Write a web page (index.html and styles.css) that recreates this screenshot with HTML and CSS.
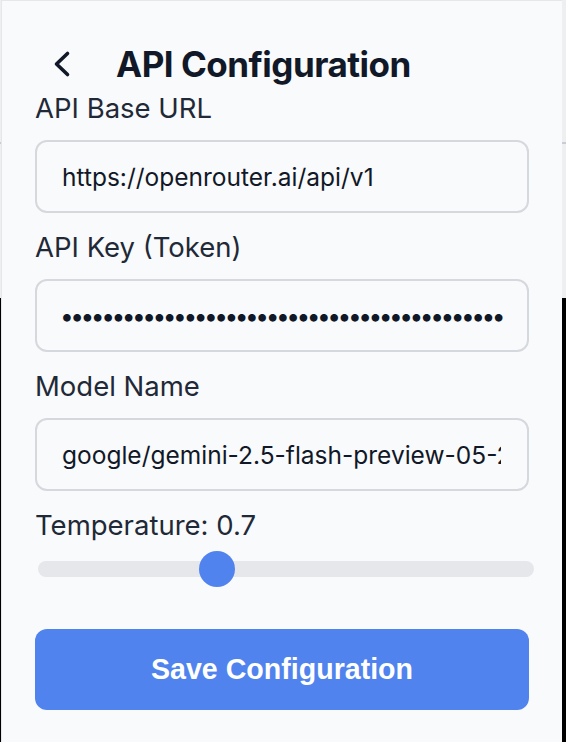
FILE: index.html
```html
<!DOCTYPE html>
<html lang="en">
<head>
<meta charset="utf-8">
<title>API Configuration</title>
<link rel="stylesheet" href="styles.css">
</head>
<body>
<div class="backdrop">
  <div class="backdrop-top"></div>
  <div class="backdrop-bottom"></div>
</div>
<div class="panel">
  <header class="panel-header">
    <button class="back-btn" type="button" aria-label="Back">
      <svg width="20" height="28" viewBox="0 0 20 28" fill="none">
        <path d="M14.5 3.5 L3.5 14 L14.5 24.5" stroke="#111827" stroke-width="3.6" stroke-linecap="round" stroke-linejoin="round"/>
      </svg>
    </button>
    <h1 class="title">API Configuration</h1>
  </header>
  <form class="form">
    <div class="field">
      <label class="label" for="base">API Base URL</label>
      <input class="input" id="base" type="text" value="https://openrouter.ai/api/v1">
    </div>
    <div class="field">
      <label class="label" for="key">API Key (Token)</label>
      <input class="input input--secret" id="key" type="password" value="sk-or-v1-abcdefghijklmnopqrstuvwxyz01234567">
    </div>
    <div class="field">
      <label class="label" for="model">Model Name</label>
      <input class="input" id="model" type="text" value="google/gemini-2.5-flash-preview-05-20">
    </div>
    <div class="field field--range">
      <label class="label" for="temp">Temperature: 0.7</label>
      <input class="range" id="temp" type="range" min="0" max="2" step="0.1" value="0.7">
    </div>
    <button class="save-btn" type="button">Save Configuration</button>
  </form>
</div>
</body>
</html>
```
FILE: styles.css
```css
* { box-sizing: border-box; }

html, body {
  margin: 0;
  padding: 0;
  width: 566px;
  height: 742px;
  overflow: hidden;
}

body {
  font-family: Inter, "Noto Sans", sans-serif;
  color: #111827;
}

.backdrop {
  display: flex;
  flex-direction: column;
  height: 742px;
}

.backdrop-top {
  height: 298px;
  background: linear-gradient(to bottom,
    #eeeff1 0, #eeeff1 142px,
    #c9ccd2 142px, #c9ccd2 144px,
    #eeeff1 144px, #eeeff1 100%);
}

.backdrop-bottom {
  flex: 1;
  background: #000;
}

.panel {
  position: absolute;
  top: 0;
  left: 1px;
  width: 561px;
  height: 742px;
  background: #f9fafb;
  border-top: 1px solid #e5e7eb;
  border-left: 1px solid #e5e7eb;
  padding: 41px 33px 0 33px;
}

.panel-header {
  display: flex;
  align-items: center;
  height: 44px;
}

.back-btn {
  border: 0;
  background: none;
  padding: 0;
  margin: 0 0 0 18px;
  width: 20px;
  height: 28px;
  display: flex;
  cursor: pointer;
}

.title {
  margin: 0 0 0 43px;
  font-size: 35px;
  font-weight: 700;
  line-height: 44px;
  letter-spacing: -0.5px;
}

.form {
  display: flex;
  flex-direction: column;
  gap: 14px;
  margin-top: 2px;
}

.field {
  display: flex;
  flex-direction: column;
  gap: 12px;
}

.field--range {
  gap: 6px;
}

.label {
  font-size: 27.5px;
  line-height: 40px;
  color: #1f2937;
}

.input {
  width: 100%;
  height: 73px;
  border: 2px solid #d5d8dd;
  border-radius: 12px;
  background: #f9fafb;
  padding: 0 26px 0 25px;
  font-family: Inter, "Noto Sans", sans-serif;
  font-size: 24.5px;
  color: #111827;
  outline: none;
}

.input--secret {
  padding: 0 24px 0 23px;
  letter-spacing: -3.5px;
}

.range {
  -webkit-appearance: none;
  appearance: none;
  width: 496px;
  height: 36px;
  margin: 0 0 0 3px;
  background: transparent;
}

.range::-webkit-slider-runnable-track {
  height: 16px;
  border-radius: 8px;
  background: #e5e7eb;
}

.range::-webkit-slider-thumb {
  -webkit-appearance: none;
  appearance: none;
  width: 36px;
  height: 36px;
  border-radius: 50%;
  background: #5083ee;
  border: 0;
  margin-top: -10px;
}

.save-btn {
  margin-top: 28px;
  height: 81px;
  width: 100%;
  border: 0;
  border-radius: 12px;
  background: #5083ee;
  color: #ffffff;
  font-family: "Liberation Sans", Arial, sans-serif;
  font-weight: 700;
  font-size: 28.6px;
}
```
